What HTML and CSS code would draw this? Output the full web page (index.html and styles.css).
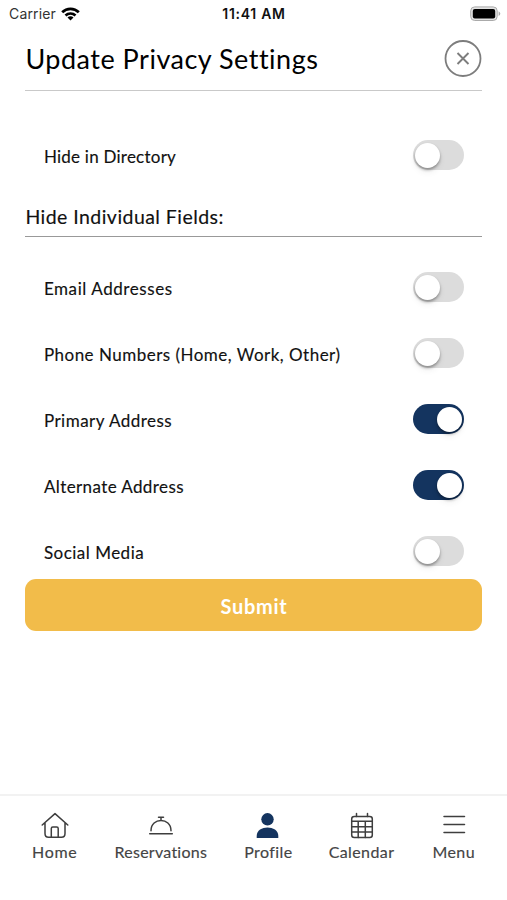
FILE: index.html
```html
<!DOCTYPE html>
<html lang="en">
<head>
<meta charset="utf-8">
<title>Update Privacy Settings</title>
<link rel="stylesheet" href="styles.css">
</head>
<body>
<div class="status">
  <div class="carrier"><span>Carrier</span>
    <svg width="19" height="14" viewBox="0 0 19 14"><g fill="none" stroke="#000" stroke-width="2.7"><path d="M1.2 5.3C5.8.6 13.200.6 17.800 5.300"/><path d="M4.500 8.500C7.300 5.800 11.700 5.800 14.500 8.500"/></g><path d="M6.500 10.400C8.200 8.900 10.800 8.900 12.500 10.400L9.500 13.500Z"/></svg>
  </div>
  <time class="clock">11:41 AM</time>
  <svg class="battery" width="31" height="16" viewBox="0 0 31 16"><rect x=".7" y=".9" width="26.500" height="13.600" rx="4" fill="#e2e2e2" stroke="#aaa"/><rect x="2.800" y="3" width="22.400" height="9.500" rx="2" fill="#000"/><path d="M28.600 5.300Q32 7.700 28.600 10.100Z" fill="#aaa"/></svg>
</div>
<main>
  <header class="heading">
    <h1>Update Privacy Settings</h1>
    <button class="close" aria-label="Close"><svg width="38" height="38" viewBox="0 0 38 38" fill="none" stroke="#7d7d7d"><circle cx="19" cy="18.500" r="17.500" stroke-width="1.800"/><path d="M13.500 13L24.500 24M24.500 13L13.500 24" stroke-width="1.900"/></svg></button>
  </header>
  <section class="rows first">
    <label class="row"><span class="directory">Hide in Directory</span><i class="switch"></i></label>
  </section>
  <h2>Hide Individual Fields:</h2>
  <section class="rows">
    <label class="row"><span class="email">Email Addresses</span><i class="switch"></i></label>
    <label class="row"><span>Phone Numbers (Home, Work, Other)</span><i class="switch"></i></label>
    <label class="row"><span>Primary Address</span><i class="switch on"></i></label>
    <label class="row"><span class="alternate">Alternate Address</span><i class="switch on"></i></label>
    <label class="row"><span>Social Media</span><i class="switch"></i></label>
  </section>
  <button class="submit">Submit</button>
</main>
<nav>
  <a class="home"><svg width="28" height="28" viewBox="0 0 28 28"><path d="M1.200 13L14 1.600L26.800 13M4 11V21.500Q4 25.300 7.500 25.300H20.500Q24 25.300 24 21.500V11M10.300 25.300V16.500Q10.300 15 11.800 15H15.700Q17.200 15 17.200 16.500V25.300"/></svg><span>Home</span></a>
  <a class="reservations"><svg width="28" height="28" viewBox="0 0 28 28"><path d="M2.700 21.700H25.300M4 18.700C4 5 24 5 24 18.700M14 8.200V5.200M11.500 5.200H16.500"/></svg><span>Reservations</span></a>
  <a class="profile"><svg width="28" height="28" viewBox="0 0 28 28"><g fill="#14345f" stroke="none"><circle cx="13.500" cy="7.300" r="6.200"/><path d="M2.700 26V24C2.700 12.700 24.300 12.700 24.300 24V26Z"/></g></svg><span>Profile</span></a>
  <a class="calendar"><svg width="28" height="28" viewBox="0 0 28 28"><rect x="3.700" y="4.500" width="20.600" height="21" rx="2.500"/><path d="M8.500 1.500V4.500M19.500 1.500V4.500M3.700 9.300H24.300M3.700 14.700H24.300M3.700 20H24.300M10.200 9.300V25.500M17.300 9.300V25.500"/></svg><span>Calendar</span></a>
  <a class="menu"><svg width="28" height="28" viewBox="0 0 28 28"><path d="M4 4.500H24.500M4 12.500H24.500M4 20.500H24.500"/></svg><span>Menu</span></a>
</nav>
</body>
</html>
```
FILE: styles.css
```css
* { box-sizing: border-box; }
body {
  margin: 0;
  height: 900px;
  display: flex;
  flex-direction: column;
  background: #fff;
  color: #111;
  font-family: Lato, sans-serif;
  font-variant-ligatures: none;
  overflow: hidden;
}
svg { display: block; flex: none; }
button { border: 0; padding: 0; background: none; font: inherit; }
.status {
  height: 27px;
  padding: 0 6px 0 9px;
  display: grid;
  grid-template-columns: 1fr auto 1fr;
  align-items: center;
  font: 14px/17px Inter, sans-serif;
}
.carrier { display: flex; align-items: center; gap: 5px; color: #333; letter-spacing: .15px; }
.clock { font-weight: 600; letter-spacing: .7px; margin-right: 2px; }
.battery { justify-self: end; }
main { padding: 0 24.600px 0 25.400px; flex: 1; }
.heading {
  height: 64px;
  padding-top: 1px;
  display: flex;
  justify-content: space-between;
  align-items: center;
  border-bottom: 1px solid #c9c9c9;
}
h1 { margin: 0; font-size: 27px; line-height: 32px; font-weight: 400; letter-spacing: .5px; color: #000; }
.first { padding-top: 31px; }
.rows { display: flex; flex-direction: column; }
.row {
  height: 66px;
  padding: 0 18px 0 18.500px;
  display: flex;
  align-items: center;
  justify-content: space-between;
  font-size: 17px;
  line-height: 22px;
  letter-spacing: .49px;
  -webkit-text-stroke: .15px #111;
}
.row span { padding-top: 4px; }
.row .directory { letter-spacing: .24px; }
.row .email { letter-spacing: .58px; }
.row .alternate { letter-spacing: .4px; }
.switch {
  width: 51.500px;
  height: 30px;
  padding: 3px 2px;
  border-radius: 15px;
  display: flex;
  background: #dcdcdc;
}
.switch::before {
  content: "";
  width: 25px;
  height: 25px;
  border-radius: 50%;
  background: #fff;
  box-shadow: 0 2px 3px #0005, 0 4px 7px #0001;
}
.on { justify-content: flex-end; background: #14345f; }
h2 {
  margin: 0 0 17px;
  height: 49px;
  padding-top: 17px;
  border-bottom: 1px solid #999;
  font-size: 19.500px;
  line-height: 24px;
  font-weight: 400;
  letter-spacing: .45px;
  -webkit-text-stroke: .15px #111;
}
.submit {
  width: 100%;
  height: 52px;
  margin-top: -5px;
  padding-top: 2px;
  border-radius: 11px;
  display: block;
  background: #f2bc4a;
  color: #fff;
  font-size: 20px;
  font-weight: 700;
  letter-spacing: .7px;
}
nav {
  height: 106px;
  border-top: 2px solid #f2f2f2;
  padding: 16px 32px 0;
  display: flex;
  justify-content: space-between;
}
nav a {
  display: flex;
  flex-direction: column;
  align-items: center;
  gap: 2px;
  font-size: 16px;
  line-height: 20px;
  letter-spacing: .4px;
  color: #444;
  -webkit-text-stroke: .15px #444;
}
.calendar { margin: 0 1px 0 -1px; }
.home { letter-spacing: .7px; }
.reservations { letter-spacing: .25px; }
nav svg { fill: none; stroke: #3e3e3e; stroke-width: 1.500; stroke-linecap: round; stroke-linejoin: round; }
```
